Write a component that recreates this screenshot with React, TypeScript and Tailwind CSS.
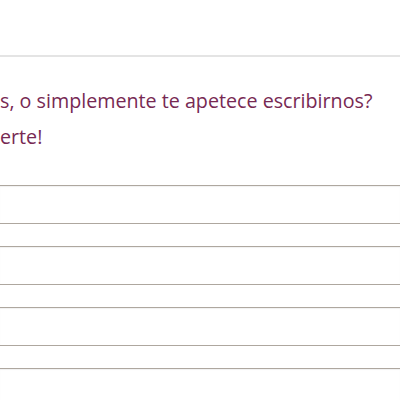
export default function App() {
  const fields = ["nombre", "email", "asunto", "mensaje"];

  return (
    <div className="w-[400px] h-[400px] overflow-hidden bg-white font-['Open_Sans',sans-serif]">
      <div className="h-[57px] border-b-2 border-[#e4e4e4]" />

      {/* intro */}
      <div className="pt-[26px] text-[19.7px] leading-[36px] text-[#772953] whitespace-nowrap">
        <p>s, o simplemente te apetece escribirnos?</p>
        <p>erte!</p>
      </div>

      {/* campos del formulario */}
      <div className="mt-[30px] flex flex-col gap-[22px]">
        {fields.map((f) => (
          <input
            key={f}
            name={f}
            className="block w-full h-[39px] border-y border-[#aea79f] bg-white shadow-[inset_0_1px_1px_rgba(0,0,0,0.06)] outline-none"
          />
        ))}
      </div>
    </div>
  );
}
